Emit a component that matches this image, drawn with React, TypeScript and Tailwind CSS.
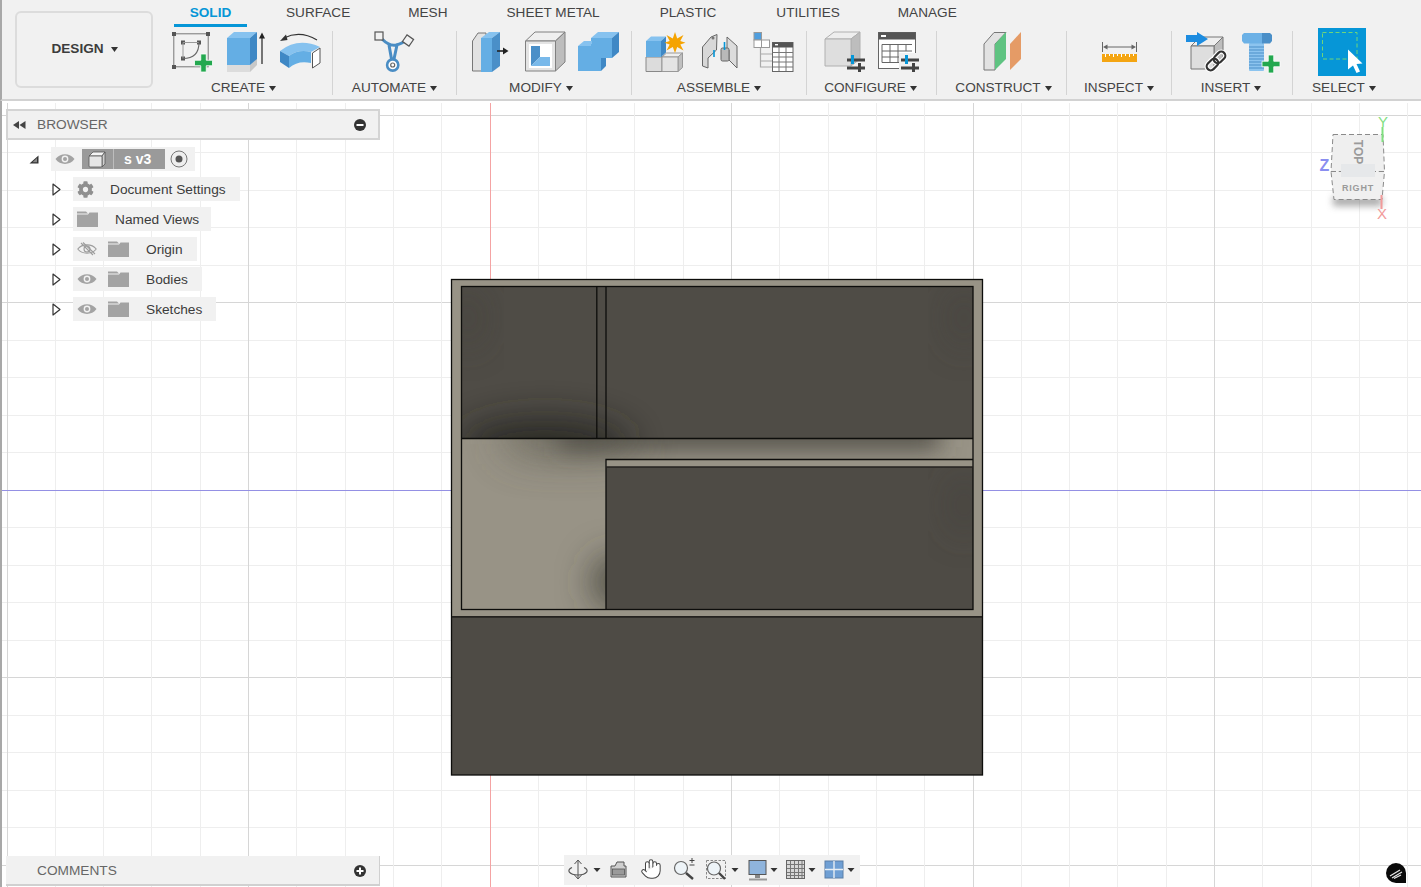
import React from "react";
import { FaCog } from "react-icons/fa";
import { Hand } from "lucide-react";

const F = "[font-family:'Liberation_Sans',Arial,sans-serif]";

function Caret({ className = "" }: { className?: string }) {
  return (
    <svg width="7" height="5" viewBox="0 0 7 5" className={className}>
      <path d="M0 0H7L3.5 5Z" fill="#333" />
    </svg>
  );
}

const BLUE = "#64aee4";
const BLUE_TOP = "#86c2ef";
const BLUE_DARK = "#3f88c5";
const GREEN = "#23a84f";

function Box({ x, y, w, h, dx, dy, front, top, side, stroke }: any) {
  return (
    <g stroke={stroke || "none"} strokeWidth="1" strokeLinejoin="round">
      <path d={`M${x} ${y}L${x + dx} ${y - dy}H${x + w + dx}L${x + w} ${y}Z`} fill={top} />
      <path d={`M${x + w} ${y}L${x + w + dx} ${y - dy}V${y + h - dy}L${x + w} ${y + h}Z`} fill={side} />
      <rect x={x} y={y} width={w} height={h} fill={front} />
    </g>
  );
}

function Plus({ cx, cy, s = 17, t = 5 }: any) {
  return (
    <path
      d={`M${cx - t / 2} ${cy - s / 2}h${t}v${(s - t) / 2}h${(s - t) / 2}v${t}h${-(s - t) / 2}v${(s - t) / 2}h${-t}v${-(s - t) / 2}h${-(s - t) / 2}v${-t}h${(s - t) / 2}z`}
      fill={GREEN}
      stroke="#fff"
      strokeWidth="0.8"
    />
  );
}

function Sliders({ x }: { x: number }) {
  return (
    <g>
      <rect x={x} y="58.5" width="18" height="3" fill="#444" />
      <rect x={x} y="66.5" width="18" height="3" fill="#444" />
      <rect x={x + 4} y="55" width="3" height="9" fill="#0696d7" />
      <rect x={x + 11} y="63" width="3" height="9" fill="#444" />
    </g>
  );
}

function CreateIcons() {
  return (
    <g>
      <rect x="173.8" y="33.8" width="34.4" height="33" fill="none" stroke="#777" strokeWidth="1" />
      {[[174, 34], [208, 34], [174, 67], [183, 42.5], [199, 42.5], [183, 58.5]].map(([x, y], i) => (
        <rect key={i} x={x - 2} y={y - 2} width="4" height="4" fill="#555" />
      ))}
      <path d="M183 42.5H199M183 42.5V58.5" stroke="#999" fill="none" />
      <path d="M199 42.5Q199 58.5 183 58.5" stroke="#666" fill="none" strokeWidth="1.1" />
      <Plus cx={203.5} cy={63} s={18} t={5.5} />

      <path d="M227 65H250L257 58V65L250 72H227Z" fill="#c8c8c8" />
      <path d="M227 65H250V72H227Z" fill="#dcdcdc" />
      <Box x={227} y={38} w={23} h={27} dx={7} dy={6} front={BLUE} top={BLUE_TOP} side={BLUE_DARK} />
      <path d="M262 64V36" stroke="#222" strokeWidth="1.2" />
      <path d="M262 32.5L265 38.5H259Z" fill="#222" />

      <path d="M317 40Q300 30 284 38" stroke="#333" strokeWidth="1.2" fill="none" />
      <path d="M280 41L286 34.5L287.5 40Z" fill="#333" />
      <path d="M280 51L289 56Q298 49 311 52L320 47Q298 37 280 51Z" fill={BLUE_TOP} />
      <path d="M289 56Q298 49 311 52V63Q298 60 289 68Z" fill={BLUE} />
      <path d="M280 51L289 56V68L280 62Z" fill={BLUE_DARK} />
      <path d="M312.5 53L320 48V63L312.5 68Z" fill="#fff" stroke="#555" strokeWidth="1" />
    </g>
  );
}

function AutomateIcon() {
  return (
    <g>
      <path d="M382 39C387 44 391 46 396 45C400 44 403 43 406 40M389 45L391.5 59M397 45L394 59" stroke="#4a8dc4" strokeWidth="3" fill="none" />
      <circle cx="392.7" cy="65" r="5.6" fill="#fff" stroke="#4a8dc4" strokeWidth="2.6" />
      <circle cx="392.7" cy="65" r="2" fill="none" stroke="#666" strokeWidth="1.2" />
      <rect x="375" y="32" width="8" height="8" fill="#f1f1f1" stroke="#555" strokeWidth="1.2" />
      <rect x="404" y="36.5" width="8" height="8" fill="#f1f1f1" stroke="#555" strokeWidth="1.2" transform="rotate(35 408 40.5)" />
    </g>
  );
}

function ModifyIcons() {
  return (
    <g>
      <path d="M472.5 71V41L478 33H486V71Z" fill="#e2e2e2" stroke="#777" strokeWidth="1" />
      <Box x={481} y={38} w={11} h={34} dx={8} dy={6} front={BLUE} top={BLUE_TOP} side={"#4a8fc8"} />
      <path d="M497 51H504" stroke="#222" strokeWidth="1.6" />
      <path d="M508.5 51L503 47.5V54.5Z" fill="#222" />

      <Box x={525.5} y={41} w={30} h={30} dx={9.5} dy={9} front="#e4e4e4" top="#efefef" side="#bdbdbd" stroke="#808080" />
      <rect x="529" y="44" width="23" height="24" fill="#fff" />
      <path d="M531 46H540V57L531 66Z" fill="#4a8fc8" />
      <path d="M540 57H550V66H531Z" fill="#79b9ea" />

      <Box x={591} y={38} w={21} h={20} dx={7} dy={6} front={BLUE} top={BLUE_TOP} side={BLUE_DARK} />
      <path d="M601 58H606V66L601 71Z" fill={BLUE_DARK} />
      <path d="M578 46L584 41H592V46Z" fill={BLUE_TOP} />
      <rect x="578" y="46" width="23" height="25" fill={BLUE} />
      <rect x="591" y="44" width="12" height="14" fill={BLUE} />
    </g>
  );
}

function AssembleIcons() {
  return (
    <g>
      <Box x={646} y={57} w={16} h={14.5} dx={0} dy={0} front="#dcdcdc" top="#eee" side="#bbb" stroke="#888" />
      <Box x={662} y={57} w={16} h={14.5} dx={4.5} dy={4} front="#e4e4e4" top="#eee" side="#c0c0c0" stroke="#999" />
      <Box x={646} y={41} w={15} h={16} dx={5} dy={4.5} front={BLUE} top={BLUE_TOP} side={BLUE_DARK} />
      <path d="M675 32L677.2 38.5 683.5 35 680.3 41 685.5 42.7 680.3 44.5 683.5 50.5 677.2 47 675 53 672.8 47 666.5 50.5 669.7 44.5 664.5 42.7 669.7 41 666.5 35 672.8 38.5Z" fill="#f5a300" />

      <path d="M702.5 66V47L711 37 717 34.5 716.5 50 708 58V68Z" fill="#d8d8d8" stroke="#666" strokeWidth="1" strokeLinejoin="round" />
      <circle cx="713" cy="38" r="1.5" fill="#777" />
      <path d="M714 50V57" stroke="#0696d7" strokeWidth="1.6" />
      <path d="M737 68V46L727 37V49L729 50V60L737 68Z" fill="#dcdcdc" stroke="#666" strokeWidth="1" strokeLinejoin="round" />
      <rect x="721" y="48" width="8" height="13" rx="1.5" fill="#b9b9b9" stroke="#666" strokeWidth="1" />
      <path d="M724.5 42V50" stroke="#0696d7" strokeWidth="1.6" />

      <rect x="754" y="32.5" width="7.5" height="7.5" fill="#4f9ede" stroke="#999" />
      <rect x="754" y="40" width="7.5" height="7.5" fill="#fff" stroke="#999" />
      <rect x="761.5" y="40" width="8" height="7.5" fill="#fff" stroke="#999" />
      <path d="M760.5 48V67.5M760.5 54H772M760.5 61H772M760.5 67H772" stroke="#aaa" strokeWidth="1.2" fill="none" />
      <rect x="772.5" y="42.5" width="20.5" height="29" fill="#fff" stroke="#666" />
      <rect x="772.5" y="42.5" width="20.5" height="5" fill="#555" />
      <rect x="775" y="44" width="3" height="1.4" fill="#fff" />
      <path d="M772.5 52.5H793M772.5 57H793M772.5 62H793M772.5 67H793M779 47V71M786 47V71" stroke="#777" strokeWidth="1" />
    </g>
  );
}

function ConfigureIcons() {
  return (
    <g>
      <Box x={825} y={39} w={26} h={27} dx={9} dy={7} front="#dedede" top="#eeeeee" side="#bdbdbd" stroke="#b0b0b0" />
      <Sliders x={847} />
      <rect x="878.5" y="32.5" width="37" height="36" fill="#fff" stroke="#666" />
      <rect x="878.5" y="32.5" width="37" height="7" fill="#555" />
      <rect x="881" y="35" width="5" height="2" fill="#fff" />
      <path d="M882 44.5H912M882 51H912M882 57H900M882 62.5H900M882 44.5V62.5M890 44.5V62.5M898 44.5V62.5M906 44.5V51" stroke="#666" strokeWidth="1" fill="none" />
      <rect x="899" y="53" width="21" height="19" fill="#f1f1f1" />
      <Sliders x={901} />
    </g>
  );
}

function ConstructIcon() {
  return (
    <g>
      <path d="M984 44L994 32.5H1006L995 44V70H984Z" fill="#e2e2e2" stroke="#777" strokeWidth="1" />
      <path d="M995 44L1006 32V59L995 70Z" fill="#5fc381" />
      <path d="M1010 44L1021 32V59L1010 70Z" fill="#e59b66" />
    </g>
  );
}

function InspectIcon() {
  return (
    <g>
      <path d="M1102.5 42V52M1136.5 42V52M1105 47H1134" stroke="#666" strokeWidth="1" />
      <path d="M1103 47L1107.5 44.5V49.5ZM1136 47L1131.5 44.5V49.5Z" fill="#666" />
      <rect x="1102" y="54" width="35" height="8" fill="#f4a512" />
      <path d="M1105.5 54V57M1109.5 54V56M1113.5 54V57M1117.5 54V56M1121.5 54V57M1125.5 54V56M1129.5 54V57M1133.5 54V56" stroke="#fff" strokeWidth="1" />
    </g>
  );
}

function InsertIcons() {
  return (
    <g>
      <Box x={1191} y={46} w={23} h={23} dx={9} dy={9} front="#dedede" top="#eeeeee" side="#bdbdbd" stroke="#777" />
      <path d="M1186 35H1197V32L1208 39 1197 46V42H1186Z" fill="#1c8ce0" />
      <g transform="rotate(-45 1216 61)" fill="none">
        <rect x="1204.5" y="57" width="13" height="8" rx="4" stroke="#fff" strokeWidth="4.5" />
        <rect x="1214.5" y="57" width="13" height="8" rx="4" stroke="#fff" strokeWidth="4.5" />
        <rect x="1204.5" y="57" width="13" height="8" rx="4" stroke="#333" strokeWidth="2.2" />
        <rect x="1214.5" y="57" width="13" height="8" rx="4" stroke="#333" strokeWidth="2.2" />
      </g>

      <rect x="1249" y="43" width="15" height="28" rx="1" fill="#8cc4ef" />
      <path d="M1249 47H1264M1249 50H1264M1249 53H1264M1249 56H1264M1249 59H1264M1249 62H1264M1249 65H1264M1249 68H1264" stroke="#4a8fc8" strokeWidth="1" />
      <path d="M1242 35L1244 33H1262V43.5H1244L1242 41Z" fill="#6cb1e6" />
      <path d="M1262 33H1270L1272 35V41L1270 43.5H1262Z" fill="#4a8fc8" />
      <Plus cx={1271} cy={64} s={18} t={5.5} />
    </g>
  );
}

function SelectIcon() {
  return (
    <g>
      <rect x="1318" y="28" width="48" height="48" fill="#0696d7" />
      <rect x="1322.5" y="32.5" width="34.5" height="26.5" fill="none" stroke="#6fd57a" strokeWidth="1" strokeDasharray="4 2.5" />
      <path d="M1348 49.5L1362.5 63.5 1356.5 64 1360 71.5 1356.5 73 1353 65.5 1348 69.5Z" fill="#fff" />
    </g>
  );
}

function Group({ x, w, label, labelClass = "", children }: { x: number; w: number; label: string; labelClass?: string; children: React.ReactNode }) {
  return (
    <div className="flex flex-col mt-[1px]" style={{ width: w }}>
      <svg width={w} height="48" viewBox={`${x} 28 ${w} 48`} className="block">
        {children}
      </svg>
      <div className={`mt-[4px] h-[16px] flex items-center justify-center gap-[4px] text-[13.6px] leading-none text-[#444] ${labelClass}`}>
        <span>{label}</span>
        <Caret />
      </div>
    </div>
  );
}

function Sep() {
  return <div className="w-px h-[64px] mt-[4px] bg-[#d4d4d4]" />;
}

function Toolbar() {
  const tabs: [string, string][] = [
    ["SURFACE", "ml-[39px]"],
    ["MESH", "ml-[58px]"],
    ["SHEET METAL", "ml-[59px]"],
    ["PLASTIC", "ml-[60px]"],
    ["UTILITIES", "ml-[60px]"],
    ["MANAGE", "ml-[58px]"],
  ];
  return (
    <header className="h-[101px] shrink-0 flex bg-[#f1f1f1] border-b-2 border-[#d2d2d2] border-l-2 border-l-[#a8a8a8]">
      <button className="mt-[11px] ml-[13px] w-[138px] h-[77px] shrink-0 rounded-[6px] border-2 border-[#dcdcdc] flex items-center justify-center gap-[7px] pl-[1px] text-[13.6px] font-bold text-[#3c3c3c]">
        <span>DESIGN</span>
        <Caret />
      </button>
      <div className="flex flex-col ml-[2px]">
        <nav className="h-[27px] flex text-[13.6px] text-[#444] leading-none">
          <div className="ml-[19px] w-[73px] h-[27px] border-b-[3px] border-[#0696d7] flex justify-center pt-[6px] font-bold text-[#0696d7]">SOLID</div>
          {tabs.map(([t, c]) => (
            <div key={t} className={`${c} pt-[6px]`}>{t}</div>
          ))}
        </nav>
        <div className="flex">
          <Group x={155} w={177} label="CREATE"><CreateIcons /></Group>
          <Sep />
          <Group x={333} w={123} label="AUTOMATE"><AutomateIcon /></Group>
          <Sep />
          <Group x={457} w={174} label="MODIFY" labelClass="pr-[6px]"><ModifyIcons /></Group>
          <Sep />
          <Group x={632} w={174} label="ASSEMBLE"><AssembleIcons /></Group>
          <Sep />
          <Group x={807} w={129} label="CONFIGURE" labelClass="pr-[2px]"><ConfigureIcons /></Group>
          <Sep />
          <Group x={937} w={129} label="CONSTRUCT" labelClass="pl-[4px]"><ConstructIcon /></Group>
          <Sep />
          <Group x={1067} w={104} label="INSPECT"><InspectIcon /></Group>
          <Sep />
          <Group x={1172} w={120} label="INSERT" labelClass="pr-[2px]"><InsertIcons /></Group>
          <Sep />
          <Group x={1293} w={102} label="SELECT"><SelectIcon /></Group>
        </div>
      </div>
    </header>
  );
}

function Scene() {
  const xs: number[] = [];
  for (let k = -10; k <= 19; k++) xs.push(490 + 48.3 * k);
  const ys: number[] = [];
  for (let k = -10; k <= 10; k++) ys.push(490 + 37.5 * k);
  return (
    <svg width="1421" height="786" viewBox="0 101 1421 786" className="block absolute top-0 left-0">
      <defs>
        <filter id="b12" x="-100%" y="-200%" width="300%" height="500%"><feGaussianBlur stdDeviation="12" /></filter>
        <filter id="b18" x="-100%" y="-200%" width="300%" height="500%"><feGaussianBlur stdDeviation="18" /></filter>
        <filter id="b24" x="-100%" y="-200%" width="300%" height="500%"><feGaussianBlur stdDeviation="24" /></filter>
        <clipPath id="upper"><rect x="461.5" y="286.5" width="511.5" height="152" /></clipPath>
        <clipPath id="floor"><path d="M461.5 438.5H973V459H606V609H461.5Z" /></clipPath>
        <clipPath id="pocket"><rect x="606" y="467" width="367" height="142" /></clipPath>
      </defs>
      {ys.filter((y) => y > 110).map((y, i) => {
        const major = Math.abs(((y - 490) / 187.5) % 1) < 0.01;
        return <line key={i} x1="0" x2="1421" y1={Math.floor(y) + 0.5} y2={Math.floor(y) + 0.5} stroke={major ? "#d6d6d6" : "#eeeeee"} />;
      })}
      {xs.map((x, i) => {
        const major = (i % 5) === 0;
        return <line key={i} y1="103" y2="887" x1={Math.floor(x) + 0.5} x2={Math.floor(x) + 0.5} stroke={major ? "#d6d6d6" : "#eeeeee"} />;
      })}
      <line x1="0" x2="1421" y1="490.5" y2="490.5" stroke="#9490e4" />
      <line x1="490.5" x2="490.5" y1="103" y2="887" stroke="#f4a3a3" />
      <line x1="1" x2="1" y1="101" y2="887" stroke="#a8a8a8" strokeWidth="2" />

      <rect x="451.5" y="279.5" width="531" height="338" fill="#989386" />
      <rect x="451.5" y="617" width="531" height="158" fill="#4e4b45" />

      <rect x="461.5" y="286.5" width="511.5" height="152" fill="#4f4c46" />
      <g clipPath="url(#upper)">
        <ellipse cx="545" cy="446" rx="85" ry="26" fill="#282622" opacity=".9" filter="url(#b18)" />
        <ellipse cx="468" cy="318" rx="12" ry="30" fill="#3f3d39" opacity=".55" filter="url(#b18)" />
        <ellipse cx="964" cy="318" rx="12" ry="30" fill="#403e3a" opacity=".55" filter="url(#b18)" />
      </g>

      <path d="M461.5 438.5H973V459H606V609H461.5Z" fill="#989386" />
      <g clipPath="url(#floor)">
        <rect x="560" y="424" width="380" height="24" fill="#4c4a42" filter="url(#b12)" />
        <rect x="510" y="410" width="120" height="38" fill="#55524a" opacity=".9" filter="url(#b24)" />
        <ellipse cx="618" cy="582" rx="24" ry="24" fill="#3e3c36" filter="url(#b18)" />
      </g>

      <rect x="606" y="459" width="367" height="8" fill="#989386" />
      <rect x="606" y="467" width="367" height="142" fill="#4e4b45" />
      <g clipPath="url(#pocket)">
        <ellipse cx="964" cy="505" rx="12" ry="30" fill="#403e3a" opacity=".55" filter="url(#b18)" />
      </g>

      <g fill="none" stroke="#0d0d0b">
        <rect x="451.5" y="279.5" width="531" height="495.5" strokeWidth="1.3" />
        <rect x="461.5" y="286.5" width="511.5" height="323" strokeWidth="1.3" />
        <path d="M461.5 438.5H973M596.8 286.5V438.5M606 286.5V438.5M606 609V459.5H973" strokeWidth="1.3" />
        <path d="M606 467H973" strokeWidth="1.6" stroke="#24221f" />
        <path d="M452 616.8H982" strokeWidth="1.8" stroke="#24221f" />
      </g>
    </svg>
  );
}

function EyeIcon({ off = false }: { off?: boolean }) {
  return (
    <svg width="20" height="14" viewBox="0 0 20 14" className="block">
      {off ? (
        <g fill="none" stroke="#9d9d9d" strokeWidth="1.1">
          <path d="M.8 7C5 1.5 15 1.5 19.2 7 15 12.5 5 12.5.8 7Z" />
          <circle cx="10" cy="7" r="3" />
          <path d="M4 1L16 13M6 .5L18 12" />
        </g>
      ) : (
        <g>
          <path d="M.5 7C5 .5 15 .5 19.5 7 15 13.5 5 13.5.5 7Z" fill="#a3a3a3" />
          <circle cx="10" cy="7" r="3.4" fill="#f1f1f1" />
          <circle cx="10" cy="7" r="2" fill="#a3a3a3" />
        </g>
      )}
    </svg>
  );
}

function FolderIcon() {
  return (
    <svg width="21" height="16" viewBox="0 0 21 16" className="block">
      <path d="M0 .5H9L11 2.5H0Z" fill="#a3a3a3" />
      <path d="M0 3.5H11L12.5 1.5H21V16H0Z" fill="#a3a3a3" />
    </svg>
  );
}

function TreeArrow() {
  return (
    <svg width="9" height="13" viewBox="0 0 9 13" className="block">
      <path d="M1 1L8 6.5 1 12Z" fill="#fff" stroke="#333" strokeWidth="1.2" strokeLinejoin="round" />
    </svg>
  );
}

function Row({ children, label, labelClass }: { children: React.ReactNode; label: string; labelClass: string }) {
  return (
    <div className="flex items-center h-6 mt-[6px]">
      <div className="ml-[46px] w-[21px] shrink-0"><TreeArrow /></div>
      <div className="h-6 flex items-center bg-[#f1f1f1] pr-[14px]">
        {children}
        <span className={`pt-[2px] text-[13.7px] text-[#3c3c3c] whitespace-nowrap ${labelClass}`}>{label}</span>
      </div>
    </div>
  );
}

function Browser() {
  return (
    <aside className="absolute left-[6px] top-[8px] w-[374px]">
      <div className="h-[31px] bg-[#f1f1f1] border-2 border-[#d4d4d4] flex items-center">
        <svg width="14" height="8" viewBox="0 0 14 8" className="ml-[5px]">
          <path d="M6 0V8L0 4ZM12.5 0V8L6.5 4Z" fill="#444" />
        </svg>
        <span className="ml-[10px] pt-[1px] text-[13.7px] text-[#666]">BROWSER</span>
        <svg width="12" height="12" viewBox="0 0 12 12" className="ml-auto mr-[12px]">
          <circle cx="6" cy="6" r="6" fill="#333" />
          <rect x="2.5" y="5" width="7" height="2" fill="#fff" />
        </svg>
      </div>
      <div className="flex items-center h-6 mt-[7px]">
        <svg width="10" height="9" viewBox="0 0 10 9" className="ml-[23px] shrink-0">
          <path d="M9.5 .5V8.5H.5Z" fill="#333" />
          <path d="M8 3V7.3H3.5Z" fill="#888" />
        </svg>
        <div className="ml-[12px] h-6 w-[144px] flex items-center bg-[#f1f1f1]">
          <div className="ml-[4px]"><EyeIcon /></div>
          <div className="ml-[7px] w-[83px] h-[20px] bg-[#9a9a9a] flex items-center">
            <svg width="18" height="17" viewBox="0 0 18 17" className="ml-[6px]">
              <path d="M1 5L5 1H17L14 5Z" fill="#f5f5f5" stroke="#555" strokeWidth=".8" />
              <path d="M14 5L17 1V13L14 16Z" fill="#cfcfcf" stroke="#555" strokeWidth=".8" />
              <rect x="1" y="5" width="13" height="11" rx="1" fill="#e6e6e6" stroke="#555" strokeWidth=".8" />
            </svg>
            <div className="ml-[7px] w-px h-[20px] bg-[#bdbdbd]" />
            <span className="ml-[10px] text-[14px] font-bold text-white">s v3</span>
          </div>
          <svg width="18" height="18" viewBox="0 0 18 18" className="ml-[5px]">
            <circle cx="9" cy="9" r="8" fill="#eee" stroke="#777" />
            <circle cx="9" cy="9" r="3.5" fill="#555" />
          </svg>
        </div>
      </div>
      <Row label="Document Settings" labelClass="ml-[16px]">
        <FaCog className="ml-[4px] text-[#8f8f8f]" size={17} />
      </Row>
      <Row label="Named Views" labelClass="ml-[17px] mr-[-2px]">
        <div className="ml-[4px]"><FolderIcon /></div>
      </Row>
      <Row label="Origin" labelClass="ml-[17px]">
        <div className="ml-[4px]"><EyeIcon off /></div>
        <div className="ml-[11px]"><FolderIcon /></div>
      </Row>
      <Row label="Bodies" labelClass="ml-[17px]">
        <div className="ml-[4px]"><EyeIcon /></div>
        <div className="ml-[11px]"><FolderIcon /></div>
      </Row>
      <Row label="Sketches" labelClass="ml-[17px]">
        <div className="ml-[4px]"><EyeIcon /></div>
        <div className="ml-[11px]"><FolderIcon /></div>
      </Row>
    </aside>
  );
}

function Comments() {
  return (
    <aside className="absolute left-[6px] bottom-[1px] w-[374px] h-[30px] pt-[2px] bg-[#f1f1f1] border-b-2 border-r border-[#d0d0d0] flex items-center">
      <span className="ml-[31px] text-[13.7px] text-[#666]">COMMENTS</span>
      <svg width="12" height="12" viewBox="0 0 12 12" className="ml-auto mr-[13px]">
        <circle cx="6" cy="6" r="6" fill="#333" />
        <path d="M5 2.5H7V5H9.5V7H7V9.5H5V7H2.5V5H5Z" fill="#fff" />
      </svg>
    </aside>
  );
}

function ViewCube() {
  return (
    <svg width="90" height="115" viewBox="1310 110 90 115" className="absolute left-[1310px] top-[9px]">
      <defs>
        <filter id="cs" x="-50%" y="-100%" width="200%" height="300%"><feGaussianBlur stdDeviation="3.5" /></filter>
      </defs>
      <path d="M1333 196H1382V206H1333Z" fill="#666" opacity=".55" filter="url(#cs)" />
      <path d="M1333 134.5H1383L1384.5 171.5H1331Z" fill="#efefef" stroke="#8a8a8a" strokeDasharray="5 3" />
      <path d="M1331 171.5H1384.5L1382 199.5H1334Z" fill="#f0f0f0" stroke="#8a8a8a" strokeDasharray="5 3" />
      <rect x="1341" y="164" width="34" height="13" fill="#e6e8ea" />
      <text x="1358" y="190.5" textAnchor="middle" fontSize="9" fontWeight="700" letterSpacing=".8" fill="#9a9a9a" fontFamily="'Liberation Sans',sans-serif">RIGHT</text>
      <text transform="translate(1354 152) rotate(90)" textAnchor="middle" fontSize="12" fontWeight="700" fill="#9a9a9a" fontFamily="'Liberation Sans',sans-serif">TOP</text>
      <path d="M1382.5 142V127" stroke="#7fe07f" strokeWidth="2" />
      <text x="1383" y="127" textAnchor="middle" fontSize="15" fill="#7fe07f" fontFamily="'Liberation Sans',sans-serif">Y</text>
      <text x="1324.5" y="171" textAnchor="middle" fontSize="16" fontWeight="700" fill="#8a8ef0" fontFamily="'Liberation Sans',sans-serif">Z</text>
      <path d="M1381.5 195V209" stroke="#f29a9a" strokeWidth="2" />
      <text x="1382" y="219" textAnchor="middle" fontSize="15" fill="#f29a9a" fontFamily="'Liberation Sans',sans-serif">X</text>
    </svg>
  );
}

function NavBar() {
  const caret = (x: number) => <path d={`M${x - 3.5} 868H${x + 3.5}L${x} 872Z`} fill="#333" />;
  return (
    <div className="absolute left-[564px] bottom-[2px] w-[296px] h-[30px] bg-[#f1f1f1]">
      <svg width="296" height="30" viewBox="564 855 296 30" className="block">
        <path d="M578 861V878M574.5 864L578 860 581.5 864M574.5 875L578 879 581.5 875" fill="#e8e8e8" stroke="#555" strokeWidth="1" />
        <path d="M572 867.5C566 870 569 875 578 875 587 875 590 870 584 867.5" fill="none" stroke="#555" strokeWidth="1.2" />
        {caret(597)}
        <path d="M611 877V866H615L617 862H624V866H626V877Z" fill="#cfcfcf" stroke="#555" strokeWidth="1" />
        <rect x="612.5" y="869" width="12" height="6" fill="#9a9a9a" stroke="#555" strokeWidth=".8" />
        <Hand x={640} y={858} width={22} height={22} strokeWidth={1.1} color="#444" fill="#fff" />
        <circle cx="681" cy="868" r="6.5" fill="#eef4f8" stroke="#666" strokeWidth="1.2" />
        <path d="M686 873L693 879" stroke="#444" strokeWidth="2.4" />
        <path d="M689.5 860.5H694.5M692 858V863M689.5 865H694.5" stroke="#444" strokeWidth="1" />
        <rect x="706.5" y="860.5" width="19" height="18" fill="none" stroke="#888" strokeDasharray="2.5 1.5" />
        <circle cx="714" cy="868.5" r="6.5" fill="#eef4f8" stroke="#666" strokeWidth="1.2" />
        <path d="M719 873L725 879" stroke="#444" strokeWidth="2.4" />
        {caret(735)}
        <rect x="749" y="860.5" width="17" height="14" fill="#8fb4dc" stroke="#555" />
        <path d="M755 875H760V878H755Z" fill="#888" />
        <path d="M749 879.5H767" stroke="#999" strokeWidth="2" />
        {caret(774)}
        <rect x="786.5" y="860.5" width="18" height="18" fill="#d8d8d8" stroke="#666" />
        <path d="M790.5 861V878M794.5 861V878M798.5 861V878M802 861V878M787 864.5H804M787 868.5H804M787 872.5H804M787 875.5H804" stroke="#777" strokeWidth="1" />
        {caret(812)}
        <rect x="825" y="861" width="18" height="17" fill="#6f9fd4" stroke="#5a7fa8" />
        <path d="M834 861V878M825 869.5H843" stroke="#e8eef4" strokeWidth="1.4" />
        {caret(851)}
      </svg>
    </div>
  );
}

function Badge() {
  return (
    <svg width="20" height="21" viewBox="0 0 20 21" className="absolute left-[1386px] bottom-[3px]">
      <path d="M10 0A10 10 0 0 1 20 10V20H10A10 10 0 0 1 10 0Z" fill="#0a0a0a" />
      <path d="M4 13L14 7M6 15L16 9M8 15.5L15 12" stroke="#e5e5e5" strokeWidth="1.3" />
    </svg>
  );
}

export default function App() {
  return (
    <div className={`w-[1421px] h-[887px] flex flex-col overflow-hidden bg-white ${F}`}>
      <Toolbar />
      <main className="relative flex-1">
        <Scene />
        <Browser />
        <Comments />
        <ViewCube />
        <NavBar />
        <Badge />
      </main>
    </div>
  );
}
